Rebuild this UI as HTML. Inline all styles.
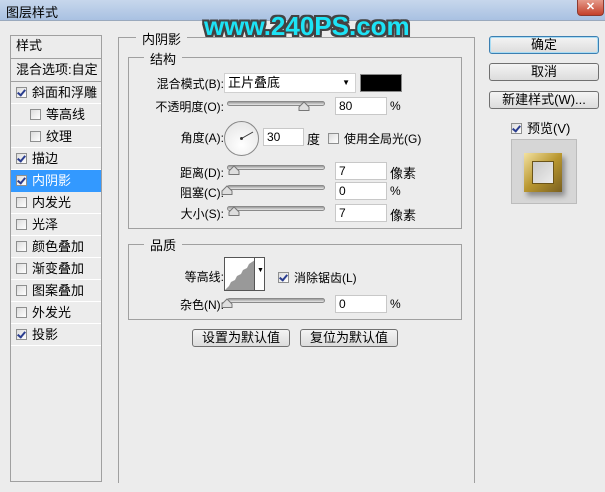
<!DOCTYPE html>
<html><head><meta charset="utf-8"><style>
*{margin:0;padding:0;box-sizing:border-box}
body{width:605px;height:492px;background:#ececec;position:relative;overflow:hidden;font-family:"Liberation Sans","Noto Sans CJK SC",sans-serif;font-size:12px;color:#000}
.a{position:absolute;white-space:nowrap}
.title{left:0;top:0;width:605px;height:21px;background:linear-gradient(#c7d7ec,#a9c1e2);border-bottom:1px solid #9aa9bd}
.close{left:577px;top:0;width:27px;height:16px;background:linear-gradient(#e59a8a,#c4402a);border:1px solid #8b3a30;border-top:none;border-radius:0 0 4px 4px;color:#fff;font-weight:bold;text-align:center;font-size:11px;line-height:15px}
.wm{left:204px;top:11px;font:bold 26px "Liberation Sans",sans-serif;color:#1de3f5;text-shadow:0 0 2px #444,2px 2px 0 #444,-2px -2px 0 #444,2px -2px 0 #444,-2px 2px 0 #444,0 2px 0 #444,2px 0 0 #444,0 -2px 0 #444,-2px 0 0 #444}
.lp{left:10px;top:35px;width:92px;height:447px;border:1px solid #a0a0a0;background:#ececec}
.row{position:absolute;left:0;width:90px;height:22px;border-bottom:1px solid #fff;line-height:21px;font-size:13px}
.cb{display:inline-block;width:11px;height:11px;border:1px solid #8e8f8f;background:linear-gradient(135deg,#dcdcdc,#fff);vertical-align:-1px;position:relative;margin-right:5px}
.cb.on::after{content:"";position:absolute;left:2px;top:0px;width:3px;height:6px;border:solid #2a3d8f;border-width:0 2px 2px 0;transform:rotate(40deg)}
.fs{border:1px solid #a0a0a0}
.lg{background:#ececec;padding:0 6px;font-size:13px}
.inp{background:#fff;border:1px solid #c8c8c8;height:18px;line-height:16px;padding-left:3px;font-size:12px}
.sl{height:5px;border:1px solid #8a8a8a;border-radius:3px;background:linear-gradient(#9a9a9a,#e8e8e8)}
.btn{border:1px solid #707070;border-radius:3px;background:linear-gradient(#f4f4f4,#dcdcdc);text-align:center;line-height:16px;font-size:13px}
.lbl{text-align:right;font-size:12px}
</style></head><body>
<div class="a title"></div>
<div class="a" style="left:6px;top:2px;font-size:13px">图层样式</div>
<div class="a close">✕</div>
<div class="a wm">www.240PS.com</div>

<div class="a lp">
<div class="row" style="top:0;height:23px;border-bottom:1px solid #a0a0a0;padding-left:5px;line-height:20px">样式</div>
<div class="row" style="top:23px;height:23px;border-bottom:1px solid #a0a0a0;padding-left:5px;line-height:22px">混合选项:自定</div>
<div class="row" style="top:46px;padding-left:5px"><span class="cb on"></span>斜面和浮雕</div>
<div class="row" style="top:68px;padding-left:19px"><span class="cb"></span>等高线</div>
<div class="row" style="top:90px;padding-left:19px"><span class="cb"></span>纹理</div>
<div class="row" style="top:112px;padding-left:5px"><span class="cb on"></span>描边</div>
<div class="row" style="top:134px;padding-left:5px;background:#3399ff;color:#fff;border-bottom-color:#3399ff"><span class="cb on"></span>内阴影</div>
<div class="row" style="top:156px;padding-left:5px"><span class="cb"></span>内发光</div>
<div class="row" style="top:178px;padding-left:5px"><span class="cb"></span>光泽</div>
<div class="row" style="top:200px;padding-left:5px"><span class="cb"></span>颜色叠加</div>
<div class="row" style="top:222px;padding-left:5px"><span class="cb"></span>渐变叠加</div>
<div class="row" style="top:244px;padding-left:5px"><span class="cb"></span>图案叠加</div>
<div class="row" style="top:266px;padding-left:5px"><span class="cb"></span>外发光</div>
<div class="row" style="top:288px;padding-left:5px"><span class="cb on"></span>投影</div>
</div>

<div class="a fs" style="left:118px;top:37px;width:357px;height:446px;border-bottom:none"></div>
<div class="a lg" style="left:136px;top:29px">内阴影</div>
<div class="a fs" style="left:128px;top:57px;width:334px;height:172px"></div>
<div class="a lg" style="left:144px;top:49px">结构</div>

<div class="a lbl" style="left:140px;top:75px;width:84px">混合模式(B):</div>
<div class="a inp" style="left:224px;top:73px;width:132px;height:20px;line-height:18px;font-size:13px;border-color:#d0d0d0">正片叠底<span style="position:absolute;right:5px;top:0;font-size:8px">▼</span></div>
<div class="a" style="left:360px;top:74px;width:42px;height:18px;background:#000;border:1px solid #888"></div>

<svg width="0" height="0" style="position:absolute"><defs><symbol id="t" viewBox="0 0 12 10"><path d="M1 9.5 L1 6 L6 1 L11 6 L11 9.5 Z" fill="#dedede" stroke="#777"/></symbol></defs></svg>

<div class="a lbl" style="left:140px;top:98px;width:84px">不透明度(O):</div>
<div class="a sl" style="left:227px;top:101px;width:98px"></div>
<svg class="a" style="left:298px;top:101px" width="12" height="10"><use href="#t"/></svg>
<div class="a inp" style="left:335px;top:97px;width:52px">80</div>
<div class="a" style="left:390px;top:99px">%</div>

<div class="a lbl" style="left:140px;top:129px;width:84px">角度(A):</div>
<div class="a" style="left:224px;top:121px;width:35px;height:35px;border-radius:50%;border:1px solid #888;background:radial-gradient(circle at 50% 70%,#fff,#e2e2e2)"></div>
<svg class="a" style="left:224px;top:121px" width="36" height="36"><line x1="17.5" y1="17.5" x2="29" y2="11" stroke="#333" stroke-width="1"/><circle cx="17.5" cy="17.5" r="1.5" fill="#333"/></svg>
<div class="a inp" style="left:263px;top:128px;width:41px">30</div>
<div class="a" style="left:307px;top:129px;font-size:13px">度</div>
<div class="a" style="left:328px;top:130px"><span class="cb"></span>使用全局光(G)</div>

<div class="a lbl" style="left:140px;top:164px;width:84px">距离(D):</div>
<div class="a sl" style="left:227px;top:165px;width:98px"></div>
<svg class="a" style="left:228px;top:165px" width="12" height="10"><use href="#t"/></svg>
<div class="a inp" style="left:335px;top:162px;width:52px">7</div>
<div class="a" style="left:390px;top:163px;font-size:13px">像素</div>

<div class="a lbl" style="left:140px;top:184px;width:84px">阻塞(C):</div>
<div class="a sl" style="left:227px;top:185px;width:98px"></div>
<svg class="a" style="left:221px;top:185px" width="12" height="10"><use href="#t"/></svg>
<div class="a inp" style="left:335px;top:182px;width:52px">0</div>
<div class="a" style="left:390px;top:184px">%</div>

<div class="a lbl" style="left:140px;top:205px;width:84px">大小(S):</div>
<div class="a sl" style="left:227px;top:206px;width:98px"></div>
<svg class="a" style="left:228px;top:206px" width="12" height="10"><use href="#t"/></svg>
<div class="a inp" style="left:335px;top:204px;width:52px">7</div>
<div class="a" style="left:390px;top:205px;font-size:13px">像素</div>

<div class="a fs" style="left:128px;top:244px;width:334px;height:76px"></div>
<div class="a lg" style="left:144px;top:235px">品质</div>
<div class="a lbl" style="left:140px;top:268px;width:84px">等高线:</div>
<div class="a" style="left:224px;top:257px;width:41px;height:34px;border:1px solid #555;background:#fff"></div>
<svg class="a" style="left:225px;top:258px" width="30" height="32"><path d="M0 32 L4 28 L6 24 L10 22 L12 18 L16 16 L18 12 L22 10 L24 6 L27 4 L30 2 L30 32 Z" fill="#999"/></svg>
<div class="a" style="left:254px;top:258px;width:1px;height:32px;background:#555"></div>
<div class="a" style="left:257px;top:267px;font-size:7px">▼</div>
<div class="a" style="left:278px;top:269px"><span class="cb on"></span>消除锯齿(L)</div>
<div class="a lbl" style="left:140px;top:296px;width:84px">杂色(N):</div>
<div class="a sl" style="left:227px;top:298px;width:98px"></div>
<svg class="a" style="left:221px;top:298px" width="12" height="10"><use href="#t"/></svg>
<div class="a inp" style="left:335px;top:295px;width:52px">0</div>
<div class="a" style="left:390px;top:297px">%</div>

<div class="a btn" style="left:192px;top:329px;width:98px;height:18px">设置为默认值</div>
<div class="a btn" style="left:300px;top:329px;width:98px;height:18px">复位为默认值</div>

<div class="a btn" style="left:489px;top:36px;width:110px;height:18px;border-color:#3c7fb1;box-shadow:inset 0 0 0 1px #a8dcf4">确定</div>
<div class="a btn" style="left:489px;top:63px;width:110px;height:18px">取消</div>
<div class="a btn" style="left:489px;top:91px;width:110px;height:18px">新建样式(W)...</div>
<div class="a" style="left:511px;top:118px;font-size:13px"><span class="cb on"></span>预览(V)</div>
<div class="a" style="left:511px;top:139px;width:66px;height:65px;border:1px solid #bcbcbc;background:#d6d6d6"></div>
<div class="a" style="left:524px;top:153px;width:38px;height:39px;background:linear-gradient(135deg,#f3e2a0,#b8962f 50%,#7a6020);box-shadow:3px 4px 5px rgba(0,0,0,.35)"></div>
<div class="a" style="left:532px;top:161px;width:22px;height:23px;background:linear-gradient(135deg,#c9c9c9,#ececec);border:1px solid #6b5418"></div>
</body></html>
